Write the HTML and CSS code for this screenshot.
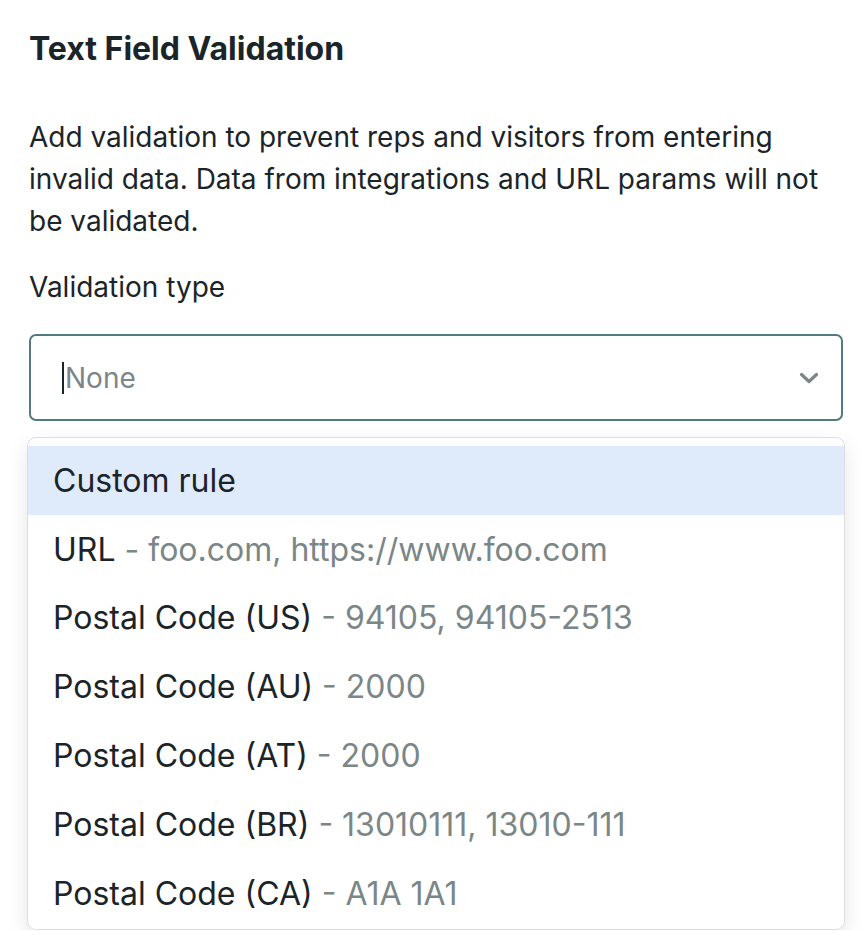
FILE: index.html
```html
<!DOCTYPE html>
<html lang="en">

<head>
  <meta charset="UTF-8">
  <meta name="viewport" content="width=device-width, initial-scale=1.0">
  <title>Text Field Validation</title>
  <link rel="stylesheet" href="styles.css">
</head>

<body>
  <section class="panel">
    <h2 class="panel-title">Text Field Validation</h2>

    <p class="panel-desc">Add validation to prevent reps and visitors from entering invalid data. Data from integrations and URL params will not be validated.</p>

    <label class="field-label">Validation type</label>

    <div class="select-box">
      <span class="caret"></span>
      <span class="select-placeholder">None</span>
      <svg class="chevron" width="20" height="12" viewBox="0 0 20 12">
        <path d="M2.5 2.5 L10 9.5 L17.5 2.5" fill="none" stroke="#7d8587" stroke-width="3.2" stroke-linecap="round" stroke-linejoin="round" />
      </svg>
    </div>

    <ul class="menu">
      <li class="menu-item active">Custom rule</li>
      <li class="menu-item">URL <span class="hint">- foo.com, https://www.foo.com</span></li>
      <li class="menu-item">Postal Code (US) <span class="hint">- 94105, 94105-2513</span></li>
      <li class="menu-item">Postal Code (AU) <span class="hint">- 2000</span></li>
      <li class="menu-item">Postal Code (AT) <span class="hint">- 2000</span></li>
      <li class="menu-item">Postal Code (BR) <span class="hint">- 13010111, 13010-111</span></li>
      <li class="menu-item">Postal Code (CA) <span class="hint">- A1A 1A1</span></li>
    </ul>
  </section>
</body>

</html>
```

FILE: styles.css
```css
body {
  margin: 0;
  font-family: 'Inter', 'Noto Sans', sans-serif;
  color: #1b2429;
  background-color: #ffffff;
}

.panel {
  padding: 28px 25px 0 29px;
}

.panel-title {
  margin: 0;
  font-size: 32px;
  font-weight: 700;
  line-height: 42px;
}

.panel-desc {
  margin: 46px 0 0;
  font-size: 28px;
  line-height: 42px;
}

.field-label {
  display: block;
  margin-top: 24px;
  font-size: 28px;
  line-height: 42px;
}

.select-box {
  margin-top: 26px;
  height: 83px;
  border: 2px solid #527a80;
  border-radius: 7px;
  display: flex;
  align-items: center;
  padding: 0 22px 0 31px;
}

.caret {
  width: 2px;
  height: 32px;
  margin-right: 1px;
  background-color: #1b2429;
}

.select-placeholder {
  flex: 1;
  font-size: 28px;
  color: #7d8587;
}

.chevron {
  display: block;
}

.menu {
  list-style: none;
  margin: 16px -2px 0;
  padding: 8px 0 1px;
  border: 1px solid #dedede;
  border-radius: 9px;
  box-shadow: 0 8px 20px rgba(0, 0, 0, 0.1);
}

.menu-item {
  height: 68.8px;
  display: flex;
  align-items: center;
  padding: 0 25px;
  font-size: 32px;
  white-space: pre;
}

.menu-item.active {
  background-color: #dfeafb;
}

.hint {
  color: #7b8687;
}
```
